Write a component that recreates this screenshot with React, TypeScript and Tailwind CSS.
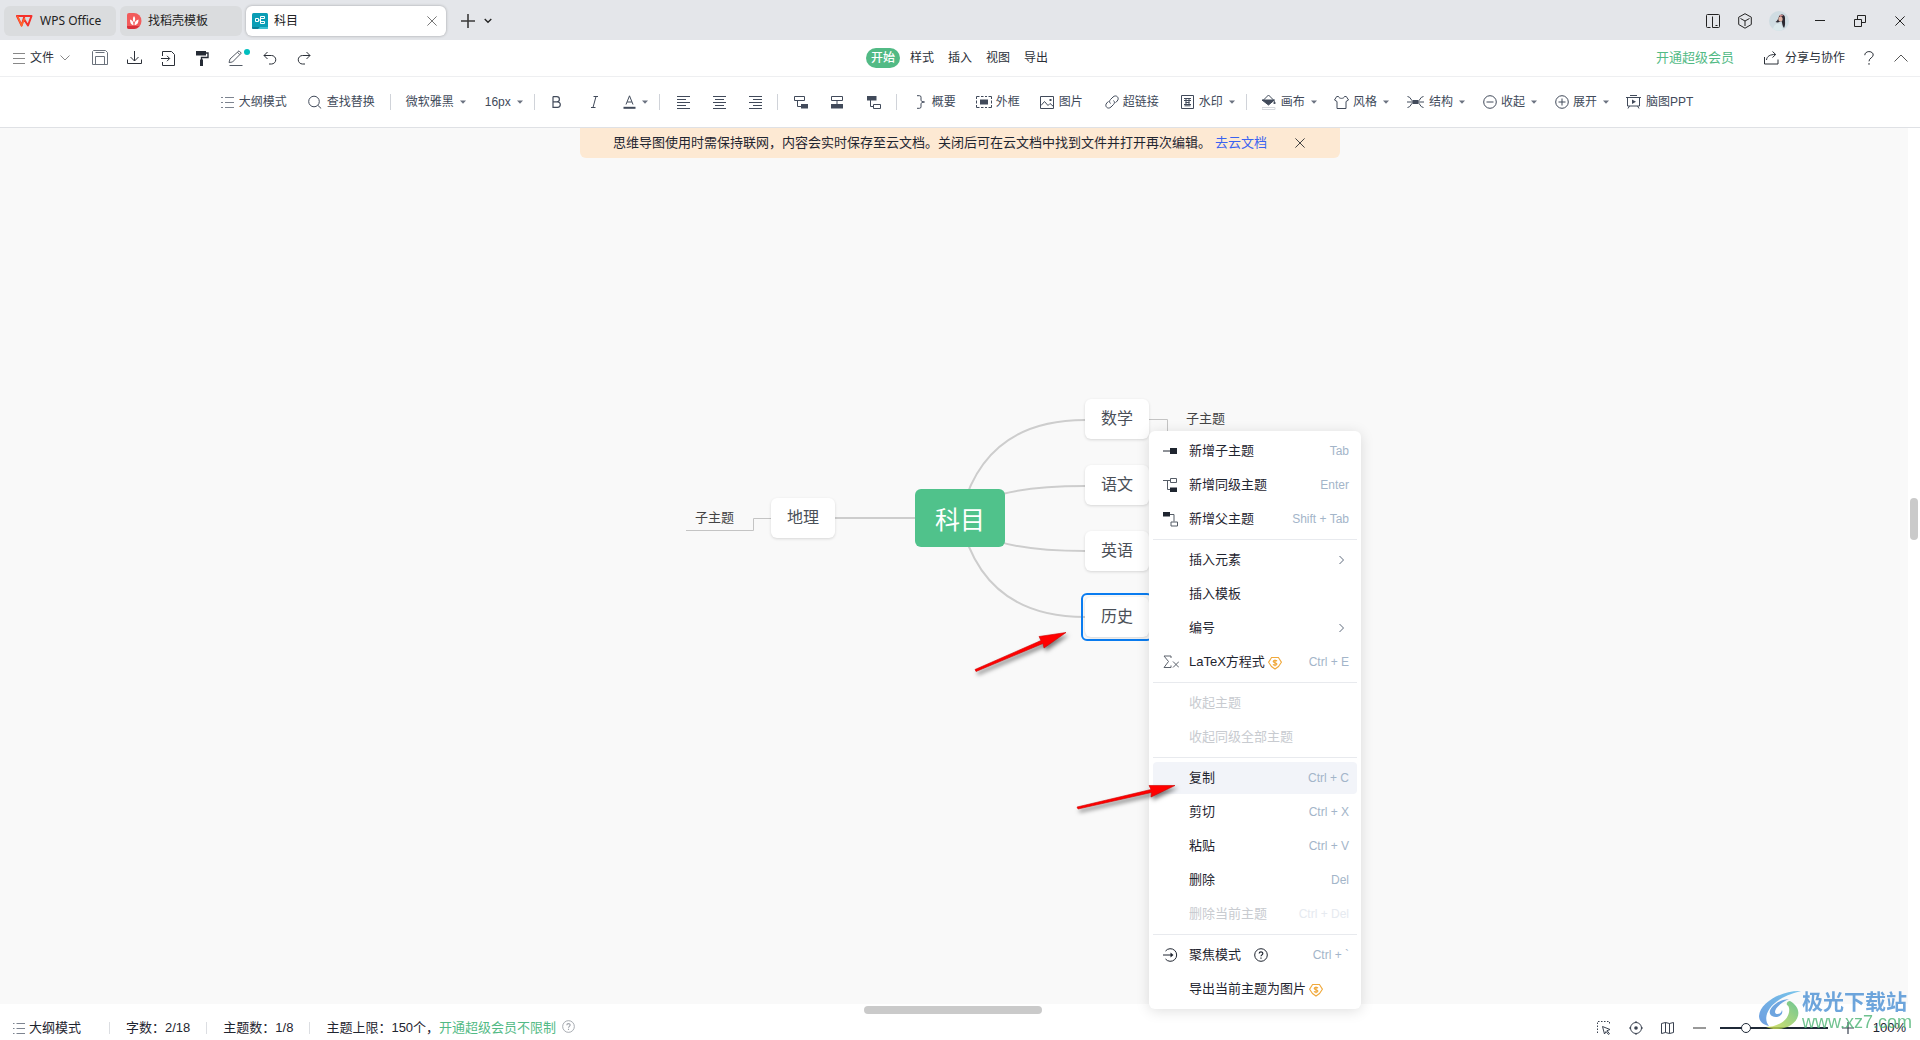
import React from "react";

type SvgProps = { children: React.ReactNode; w?: number; h?: number; vb?: string; className?: string };

function Svg({ children, w = 16, h = 16, vb, className = "" }: SvgProps) {
  return (
    <svg
      width={w}
      height={h}
      viewBox={vb ?? `0 0 ${w} ${h}`}
      fill="none"
      stroke="currentColor"
      strokeWidth={1}
      className={"shrink-0 " + className}
      aria-hidden="true"
    >
      {children}
    </svg>
  );
}

const OutlineIcon = () => (
  <Svg w={14} h={14}>
    <path d="M0 2.5h2M0 7.5h2M0 12.5h2M4 2.5h9M4 7.5h9M4 12.5h9" stroke="#7d8490" />
  </Svg>
);
const SearchIcon = () => (
  <Svg w={14} h={14}>
    <circle cx="6" cy="6.5" r="5.3" />
    <path d="M10 10.5l3.2 3" />
  </Svg>
);
const Caret = () => (
  <Svg w={6} h={4} className="text-[#6b7280]">
    <path d="M0 0.5h6l-3 3.2z" fill="currentColor" stroke="none" />
  </Svg>
);
const Close = ({ s = 10 }: { s?: number }) => (
  <Svg w={s} h={s} vb="0 0 10 10">
    <path d="M.4.4l9.2 9.2M9.6.4L.4 9.6" />
  </Svg>
);
const Coin = () => (
  <Svg w={14} h={14} className="text-[#f0a93c]">
    <path d="M3.600 1.500h6.800l3 4.700L10.500 10.500 7 13 3.500 10.500.6 6.200z" strokeWidth="1.100" />
    <path d="M8.900 5.200C8.500 4 5.200 4 5.200 5.600c0 1.500 3.700.9 3.700 2.300 0 1.600-3.300 1.500-3.800.3M7 3.500v6.800" strokeWidth="1.200" />
  </Svg>
);
const Question = ({ s = 14 }: { s?: number }) => (
  <Svg w={s} h={s} vb="0 0 14 14">
    <circle cx="7" cy="7" r="6.3" />
    <path d="M5.200 5.600c0-2.300 3.600-2.300 3.600-.1 0 1.300-1.800 1.400-1.800 2.800M7 9.500v1.200" strokeWidth="1.200" />
  </Svg>
);

function Tool({
  icon,
  label,
  caret,
  gap,
  ml,
  name,
}: {
  icon?: React.ReactNode;
  label?: string;
  caret?: boolean;
  gap?: string;
  ml: string;
  name?: string;
}) {
  return (
    <button type="button" aria-label={name} className={`flex items-center whitespace-nowrap ${ml}`}>
      {icon}
      {label && <span className={gap ?? "ml-1"}>{label}</span>}
      {caret && <span className="ml-1.5 flex"><Caret /></span>}
    </button>
  );
}
const Divider = ({ ml }: { ml: string }) => <span className={`h-4 w-px shrink-0 bg-[#d0d3d9] ${ml}`} />;

function TitleBar() {
  return (
    <header className="flex h-10 items-center bg-[#e4e6ea] pl-1 pt-px text-xs text-[#222]">
      <button type="button" className="flex h-[30px] w-28 items-center rounded-md bg-[#dadcde] pl-3">
        <Svg w={17} h={12} className="text-[#f5302b]">
          <path d="M1 1h7.500L5.600 10.500zM8.500 1h7L12 10.500 8.200 4.500" strokeWidth="2" strokeLinejoin="round" />
          <path d="M1.500 1L5.600 10.500 8.800 3" stroke="#ff6a2b" strokeWidth="1.400" />
        </Svg>
        <span className="ml-[7px] font-['Noto_Sans']">WPS Office</span>
      </button>
      <button type="button" className="ml-1 flex h-[30px] w-[122px] items-center rounded-md bg-[#dadcde] pl-1.5">
        <Svg w={16} h={16}>
          <path d="M3 0h5a7.500 8 0 010 16H3a2 2 0 01-2-2V2a2 2 0 012-2z" fill="#f25b5b" stroke="none" />
          <path d="M1 13h12.500A7.500 7.500 0 018 16H3a2 2 0 01-2-2z" fill="#d9303a" stroke="none" />
          <path d="M8 3c2 2.500 1 5 0 6.500C6.500 7.500 6.500 5 8 3zM4 6.500c2.500.5 3.500 2.500 3.500 5.500C5 12 4 9.500 4 6.500zM12.500 6.500c0 3-1 5.500-4 5.500 0-3 1.500-5 4-5.500z" fill="#fff" stroke="none" />
        </Svg>
        <span className="ml-1.5">找稻壳模板</span>
      </button>
      <div className="ml-1 flex h-[30px] w-[200px] items-center rounded-md bg-white pl-1.5 shadow-[0_0_3px_rgba(0,0,0,0.3)]">
        <Svg w={16} h={16}>
          <rect width="16" height="16" rx="1.500" fill="#0a9db5" stroke="none" />
          <path d="M0 14h8l-2 2H1.500A1.500 1.500 0 010 14.500z" fill="#0b7f97" stroke="none" />
          <path d="M8 14h8v.5a1.500 1.500 0 01-1.500 1.500H6z" fill="#3cc0d4" stroke="none" />
          <path d="M3.500 5.500h3v3h-3zM6.500 7h2M8.500 3.500v7M8.500 3.500h4v2h-4M8.500 10.500h4v-2h-4" stroke="#fff" />
        </Svg>
        <span className="ml-1.5">科目</span>
        <button type="button" aria-label="关闭标签" className="ml-auto mr-[9px] text-[#777]"><Close /></button>
      </div>
      <button type="button" aria-label="新建" className="ml-[15px]">
        <Svg w={14} h={14}><path d="M7 0v14M0 7h14" strokeWidth="1.600" stroke="#3a3a3a" /></Svg>
      </button>
      <button type="button" aria-label="标签列表" className="ml-[9px]">
        <Svg w={8} h={6}><path d="M.7 1l3.300 3.300L7.300 1" strokeWidth="1.300" /></Svg>
      </button>
      <div className="ml-auto flex items-center pr-[15px]">
        <button type="button" aria-label="分栏">
          <Svg w={14} h={14}><path d="M4.500 13.500h-3a1 1 0 01-1-1v-11a1 1 0 011-1h11a1 1 0 011 1v11a1 1 0 01-1 1h-6V2.500M9.500 11.500h2" /></Svg>
        </button>
        <button type="button" aria-label="工作空间" className="ml-[18px]">
          <Svg w={14} h={16}><path d="M7 .7l6.300 3.500v7.300L7 15.200.7 11.500V4.200zM2.500 5.500L7 8l4.500-2.500M7 8v5" /></Svg>
        </button>
        <button type="button" aria-label="用户" className="ml-[17px]">
          <Svg w={20} h={20}>
            <g stroke="none">
              <circle cx="10" cy="10" r="10" fill="#cfdce2" />
              <path d="M4 18c1-5 4-6 8-5l2 5.500a10 10 0 01-10-.5z" fill="#dbe9ec" />
              <path d="M10 5.500c2.500-3.500 6.500-2 6 2.500 0 4 .5 6-1 9-2-2-1.500-5-2.500-7-2 1-4 2-6 1 2-1 2.500-3 3.500-5.500z" fill="#2b2830" />
              <ellipse cx="11.500" cy="8" rx="2.200" ry="2.600" fill="#e3b5a5" />
              <path d="M10 4.500l2-1 2.500 1-3 1.500z" fill="#c98a8a" />
            </g>
          </Svg>
        </button>
        <button type="button" aria-label="最小化" className="ml-[26px]">
          <Svg w={10} h={10}><path d="M0 4.500h10" /></Svg>
        </button>
        <button type="button" aria-label="还原" className="ml-[29px]">
          <Svg w={12} h={12}><path d="M.5 4.500h7v7h-7zM3.500 4.500v-4h8v7h-4" /></Svg>
        </button>
        <button type="button" aria-label="关闭" className="ml-[29px]"><Close /></button>
      </div>
    </header>
  );
}

function MenuRow() {
  return (
    <nav className="grid h-[37px] grid-cols-[1fr_auto_1fr] items-center border-b border-[#eeeff1] text-xs text-[#2b3038]">
      <div className="flex items-center pl-[13px]">
        <button type="button" className="flex items-center">
          <Svg w={12} h={12} className="text-[#888]"><path d="M0 1.500h12M0 6.500h12M0 11.500h12" /></Svg>
          <span className="ml-[5px] mr-1.5">文件</span>
          <Svg w={10} h={6} className="text-[#888]"><path d="M.5.5L5 5 9.500.5" /></Svg>
        </button>
        <button type="button" aria-label="保存" className="ml-[22px]">
          <Svg><path d="M.5 1.500l1-1h12l2 2v12h-15zM3.500 2.500h9M3.500 14V6.500h9V14" stroke="#6b727c" /></Svg>
        </button>
        <button type="button" aria-label="下载" className="ml-[19px]">
          <Svg w={15} h={14}><path d="M7.500 0v10M3.500 6l4 4 4-4M.5 8.500v4h14v-4" /></Svg>
        </button>
        <button type="button" aria-label="导入" className="ml-[19px]">
          <Svg w={14} h={15}><path d="M1.500 5V.5h9l3 3v11h-12V11M0 7.500h8.500M6 4.800l2.700 2.700L6 10.200" /></Svg>
        </button>
        <button type="button" aria-label="格式刷" className="ml-5">
          <Svg w={14} h={15}>
            <path d="M1 0h10v4.500H1z" fill="#252b35" stroke="none" />
            <path d="M11 2h2v4.500H6.500V9" stroke="#252b35" strokeWidth="1.400" />
            <path d="M5 8.500h3V15H5z" fill="#252b35" stroke="none" />
          </Svg>
        </button>
        <button type="button" aria-label="画笔" className="relative ml-[19px]">
          <Svg w={15} h={16}><path d="M1 12.500l1-3.500L11 .8l2.300 2.300L4.500 12zM9.500 2.300l2.300 2.300M1.500 15.500h13" stroke="#555c66" /></Svg>
          <span className="absolute -right-[7px] -top-px size-1.5 rounded-full bg-[#00bfbf]" />
        </button>
        <button type="button" aria-label="撤销" className="ml-5">
          <Svg w={14} h={14}><path d="M4.500 1L1 4.500 4.500 8M1 4.500h7.500a4.200 4.200 0 010 8.500H6" /></Svg>
        </button>
        <button type="button" aria-label="重做" className="ml-5">
          <Svg w={14} h={14}><path d="M9.500 1L13 4.500 9.500 8M13 4.500H5.500a4.200 4.200 0 000 8.500H8" /></Svg>
        </button>
      </div>
      <div className="flex items-center pr-1.5">
        <button type="button" className="mr-2.5 h-5 w-[34px] rounded-full bg-[#52ba85] font-medium text-white">开始</button>
        {["样式", "插入", "视图", "导出"].map((t) => (
          <button type="button" key={t} className="mr-3.5 last:mr-0">{t}</button>
        ))}
      </div>
      <div className="flex items-center justify-end pr-3">
        <a href="#vip" className="text-[13px] text-[#52ba85]">开通超级会员</a>
        <button type="button" className="ml-[30px] flex items-center">
          <Svg w={15} h={14}><path d="M.5 6v7h13.500V8.500M2.500 9C3 5 6 3.500 11.500 3.500M8.500.5l3.200 3-3.200 3" /></Svg>
          <span className="ml-1.5">分享与协作</span>
        </button>
        <button type="button" aria-label="帮助" className="ml-[19px]">
          <Svg w={10} h={14}><path d="M.8 4.200C.8-.6 9.200-.6 9.200 4c0 2.700-4.200 3-4.200 6.300M5 12v1.800" /></Svg>
        </button>
        <button type="button" aria-label="收起功能区" className="ml-5">
          <Svg w={14} h={8}><path d="M.5 7.500L7 1l6.500 6.500" stroke="#555" /></Svg>
        </button>
      </div>
    </nav>
  );
}

function Toolbar() {
  return (
    <div className="flex h-[51px] items-center justify-center border-b border-[#dfe1e5] pr-1.5 text-xs text-[#414a5a]">
      <Tool ml="" icon={<OutlineIcon />} label="大纲模式" />
      <Tool ml="ml-[21px]" icon={<SearchIcon />} label="查找替换" gap="ml-[5px]" />
      <Divider ml="ml-[15px]" />
      <Tool ml="ml-[15px]" label="微软雅黑" gap="" caret />
      <Tool ml="ml-[19px]" label="16px" gap="" caret />
      <Divider ml="ml-[11px]" />
      <Tool ml="ml-[17px]" name="加粗" icon={<Svg w={10} h={12}><path d="M1 .6v10.800h4.500a2.700 2.700 0 000-5.600H1M1 .6h3.800a2.600 2.600 0 010 5.200" strokeWidth="1.200" /></Svg>} />
      <Tool ml="ml-[29px]" name="倾斜" icon={<Svg w={7} h={12}><path d="M2.500.5H7M0 11.500h4.500M5 .5l-3 11" /></Svg>} />
      <Tool ml="ml-[25px]" name="字体颜色" icon={<Svg w={13} h={14}><path d="M3 9.500L6.500.8l3.500 8.700M4.200 7h4.600" /><path d="M.5 12.800h12" strokeWidth="2" /></Svg>} caret />
      <Divider ml="ml-[11px]" />
      <Tool ml="ml-[17px]" name="左对齐" icon={<Svg w={13} h={13}><path d="M0 .5h13M0 3.500h9M0 6.500h13M0 9.500h9M0 12.500h13" /></Svg>} />
      <Tool ml="ml-[23px]" name="居中" icon={<Svg w={13} h={13}><path d="M0 .5h13M2 3.500h9M0 6.500h13M2 9.500h9M0 12.500h13" /></Svg>} />
      <Tool ml="ml-[23px]" name="右对齐" icon={<Svg w={13} h={13}><path d="M0 .5h13M4 3.500h9M0 6.500h13M4 9.500h9M0 12.500h13" /></Svg>} />
      <Divider ml="ml-[15px]" />
      <Tool ml="ml-4" name="子主题" icon={<Svg w={14} h={13}><path d="M.5.5h10v4H.5zM3.500 4.500v6h4" /><path d="M7 8h7v4.500H7z" fill="currentColor" stroke="none" /></Svg>} />
      <Tool ml="ml-[23px]" name="同级主题" icon={<Svg w={12} h={13}><path d="M.5.5h11v4H.5zM6 4.500V8" /><path d="M0 8h12v4.500H0z" fill="currentColor" stroke="none" /></Svg>} />
      <Tool ml="ml-6" name="父主题" icon={<Svg w={14} h={13}><path d="M0 0h9.500v4.500H0z" fill="currentColor" stroke="none" /><path d="M3.500 4v6.500h3M6.500 8.500h7v4h-7z" /></Svg>} />
      <Divider ml="ml-[15px]" />
      <Tool ml="ml-5" icon={<Svg w={8} h={14}><path d="M0 .7h2.500q1.500 0 1.500 1.500v3Q4 7 7.500 7 4 7 4 8.800v3q0 1.500-1.500 1.500H0" /></Svg>} label="概要" gap="ml-[7px]" />
      <Tool
        ml="ml-5"
        icon={
          <Svg w={16} h={12}>
            <path d="M.5 3V.5h3M12.500.5h3V3M15.500 9v2.500h-3M3.500 11.500h-3V9M.5 4.500v3M15.500 4.500v3M5 .5h2.500M9 .5h2M5 11.500h2.500M9 11.500h2" />
            <path d="M4 3.500h8v5H4z" fill="currentColor" stroke="none" />
          </Svg>
        }
        label="外框"
      />
      <Tool ml="ml-5" icon={<Svg w={15} h={13}><path d="M.5.5h13v12H.5zM1 9.500l3.500-4 3.500 4 2-2 3.500 3" /><path d="M9.500 3h2v2h-2z" fill="currentColor" stroke="none" /></Svg>} label="图片" />
      <Tool
        ml="ml-[22px]"
        icon={<Svg w={14} h={14}><path d="M5.500 8.500C4 7 4.500 5.500 5.500 4.500L8 2c3.200-3 7 1 4.200 4L10.500 7.700M8.500 5.500c1.500 1.500 1 3 0 4L6 12c-3.200 3-7-1-4.200-4l1.700-1.700" /></Svg>}
        label="超链接"
      />
      <Tool ml="ml-[22px]" icon={<Svg w={13} h={14}><path d="M.5.5h12v13H.5zM3 3.500h7M3 5.500h7M4.500 7.500h4M3 9.500h7M3.500 10.800h6M5 4v6M8 4v6" /></Svg>} label="水印" gap="ml-[5px]" caret />
      <Divider ml="ml-[11px]" />
      <Tool
        ml="ml-[15px]"
        icon={
          <Svg w={14} h={16}>
            <path d="M6.500 1L1 6.500h11z" />
            <path d="M0 6h12.500L6.500 11z" fill="currentColor" />
            <path d="M12.500 7.500q1.300 2 0 2.500-1.300-.5 0-2.500z" fill="currentColor" />
            <path d="M0 13.500h13v2H0z" stroke="#d5d8dd" />
          </Svg>
        }
        label="画布"
        gap="ml-[5px]"
        caret
      />
      <Tool ml="ml-[17px]" icon={<Svg w={15} h={13}><path d="M4.500.5C5 3 10 3 10.500.5h1.800L14.500 4 12 5.500V12.500H3V5.500L.5 4 2.700.5z" /></Svg>} label="风格" caret />
      <Tool
        ml="ml-[18px]"
        icon={
          <Svg w={17} h={12}>
            <path d="M0 6h17M.5.5C4 .5 4 5.500 6.500 5.500M.5 11.500C4 11.500 4 6.500 6.500 6.500M16.500.5C13 .5 13 5.500 10.500 5.500M16.500 11.500C13 11.500 13 6.500 10.500 6.500" />
            <path d="M6 4h5v4H6z" fill="currentColor" stroke="none" />
          </Svg>
        }
        label="结构"
        gap="ml-[5px]"
        caret
      />
      <Tool ml="ml-[18px]" icon={<Svg w={14} h={14}><circle cx="7" cy="7" r="6.300" /><path d="M3.500 7h7" /></Svg>} label="收起" caret />
      <Tool ml="ml-[18px]" icon={<Svg w={14} h={14}><circle cx="7" cy="7" r="6.300" /><path d="M3.500 7h7M7 3.500v7" /></Svg>} label="展开" caret />
      <Tool
        ml="ml-[17px]"
        icon={<Svg w={15} h={14}><path d="M4 .5h7M0 2.500h15M1.500 2.500v8.500h12V2.500M3.500 11l-1.500 2.500M11.500 11l1.500 2.500" /><path d="M6 4.500l4 2.300-4 2.300z" fill="currentColor" stroke="none" /></Svg>}
        label="脑图PPT"
        gap="ml-[5px]"
      />
    </div>
  );
}

const nodeBase = "absolute flex h-10 w-16 items-center justify-center rounded-md bg-white text-base text-[#4a4f57] shadow-[0_1px_3px_rgba(0,0,0,0.14)]";

type Entry = {
  label: string;
  icon?: React.ReactNode;
  after?: React.ReactNode;
  keys?: string;
  sub?: boolean;
  off?: boolean;
  active?: boolean;
};

const groups: Entry[][] = [
  [
    { label: "新增子主题", keys: "Tab", icon: <Svg w={14} h={6}><path d="M0 3h8" /><path d="M7 0h7v6H7z" fill="currentColor" stroke="none" /></Svg> },
    { label: "新增同级主题", keys: "Enter", icon: <Svg w={14} h={14}><path d="M0 2.500h7M4.500 2.500v9h3M7.500.5h6v4h-6z" stroke="#555c66" /><path d="M7 9.500h7V14H7z" fill="currentColor" stroke="none" /></Svg> },
    { label: "新增父主题", keys: "Shift + Tab", icon: <Svg w={15} h={15}><path d="M0 0h7v4.500H0z" fill="currentColor" stroke="none" /><path d="M7 2.500h4v7M8 10h6.500v4H8z" stroke="#555c66" /></Svg> },
  ],
  [
    { label: "插入元素", sub: true },
    { label: "插入模板" },
    { label: "编号", sub: true },
    {
      label: "LaTeX方程式",
      keys: "Ctrl + E",
      after: <span className="ml-[3px] mt-0.5"><Coin /></span>,
      icon: <Svg w={16} h={14}><path d="M8 3V1H1l4.500 5.500L1 12.500h7v-2M10 6.500l6 6M16 6.500l-6 6" stroke="#5c626c" /></Svg>,
    },
  ],
  [
    { label: "收起主题", off: true },
    { label: "收起同级全部主题", off: true },
  ],
  [
    { label: "复制", keys: "Ctrl + C", active: true },
    { label: "剪切", keys: "Ctrl + X" },
    { label: "粘贴", keys: "Ctrl + V" },
    { label: "删除", keys: "Del" },
    { label: "删除当前主题", keys: "Ctrl + Del", off: true },
  ],
  [
    {
      label: "聚焦模式",
      keys: "Ctrl + `",
      after: <span className="ml-[13px]"><Question /></span>,
      icon: <Svg w={15} h={14}><path d="M2.500 3a6.300 6.300 0 110 8M0 7h9" /><path d="M7.500 4.500L10.500 7l-3 2.500z" fill="currentColor" stroke="none" /></Svg>,
    },
    { label: "导出当前主题为图片", after: <span className="ml-[3px] mt-0.5"><Coin /></span> },
  ],
];

function ContextMenu() {
  return (
    <div
      role="menu"
      className="absolute left-[464px] top-[303px] z-10 w-[212px] rounded-md bg-white px-1 py-[3px] text-[13px] text-[#1f2530] shadow-[0_2px_14px_rgba(0,0,0,0.13)]"
    >
      {groups.map((g, i) => (
        <div key={i} className={`flex flex-col gap-0.5 ${i ? "mt-[3px] border-t border-[#e8eaee] pb-px pt-1" : "py-px"}`}>
          {g.map((e) => (
            <button
              type="button"
              role="menuitem"
              key={e.label}
              disabled={e.off}
              className={`flex h-8 w-full items-center rounded-[4px] pr-2 ${e.active ? "bg-[#f2f4f9]" : ""} ${e.off ? "text-[#c8cbd0]" : ""}`}
            >
              <span className="flex w-9 shrink-0 items-center pl-2.5">{e.icon}</span>
              <span className="whitespace-nowrap">{e.label}</span>
              {e.after}
              {e.keys && <kbd className={`ml-auto whitespace-nowrap font-['Liberation_Sans',sans-serif] text-xs ${e.off ? "text-[#e6eaf0]" : "text-[#a3b5c9]"}`}>{e.keys}</kbd>}
              {e.sub && (
                <span className="ml-auto mr-[5px] text-[#5f6b7c]">
                  <Svg w={5} h={10}><path d="M.5 1l4 4-4 4" /></Svg>
                </span>
              )}
            </button>
          ))}
        </div>
      ))}
    </div>
  );
}

function Canvas() {
  return (
    <main className="relative flex min-h-0 flex-1">
      <div className="flex-1 bg-[#f9f9f9]" />
      <div className="flex w-3 flex-col items-end bg-white pr-0.5">
        <div className="mt-[370px] h-[42px] w-2 rounded-full bg-[#cacaca]" />
      </div>

      <div className="absolute left-1/2 top-0 flex h-[30px] w-[760px] -translate-x-1/2 items-center rounded-b-md bg-[#fde9d3] pl-[33px] text-[13px] text-[#1f2530]">
        <span className="whitespace-nowrap">思维导图使用时需保持联网，内容会实时保存至云文档。关闭后可在云文档中找到文件并打开再次编辑。</span>
        <a href="#cloud" className="ml-1 whitespace-nowrap text-[#3a63f0]">去云文档</a>
        <button type="button" aria-label="关闭提示" className="ml-7 text-[#444]"><Close /></button>
      </div>

      <div className="absolute left-1/2 top-0 -ml-[275px] h-full w-[700px]">
        <svg width="700" height="640" viewBox="0 0 700 640" fill="none" className="absolute left-0 top-0" aria-hidden="true">
          <g stroke="#cdcdcd" strokeWidth="2">
            <path d="M275 390Q297 292 400 292M275 390Q297 358 400 358M275 390Q297 423 400 423M275 390Q297 489 400 489M275 390H150" />
            <path d="M1 402.500H68.500V390.500H87M464 291.500H482.500V303.500H549" strokeWidth="1" stroke="#c4c4c4" />
          </g>
        </svg>
        <div className="absolute left-[10px] top-[380px] text-[13px] leading-5 text-[#444]">子主题</div>
        <div className="absolute left-[501px] top-[281px] text-[13px] leading-5 text-[#444]">子主题</div>
        <div className={`${nodeBase} left-[86px] top-[370px]`}>地理</div>
        <div className={`${nodeBase} left-[400px] top-[271px]`}>数学</div>
        <div className={`${nodeBase} left-[400px] top-[337px]`}>语文</div>
        <div className={`${nodeBase} left-[400px] top-[403px]`}>英语</div>
        <div className="absolute left-[396px] top-[465px] h-12 w-[72px] rounded-md border-2 border-[#0a7cf0]" />
        <div className={`${nodeBase} left-[400px] top-[469px]`}>历史</div>
        <div className="absolute left-[230px] top-[361px] flex h-[58px] w-[90px] items-center justify-center rounded-md bg-[#50c28b] pt-1 text-[25px] leading-none text-white">科目</div>
        <ContextMenu />
        <svg
          width="700"
          height="720"
          viewBox="0 0 700 720"
          className="pointer-events-none absolute left-0 top-0 z-20 drop-shadow-[2px_3px_2px_rgba(0,0,0,0.5)]"
          aria-hidden="true"
        >
          <g stroke="#c00" strokeWidth=".6" fill="#f00">
            <path d="M290 541.500L356 512.500 354 508.500 381 504.500 359 520 358 515.500 291 543.500z" />
            <path d="M392 679L466 661.500 464 657.500 490 657.500 466 669 466.500 664.500 393 681z" />
          </g>
        </svg>
      </div>
    </main>
  );
}

function StatusBar() {
  return (
    <footer className="relative flex h-9 items-end pb-px text-[13px] text-[#1f2530]">
      <div className="absolute left-1/2 top-0.5 -ml-24 h-2 w-[178px] rounded-full bg-[#cacaca]" />
      <div className="flex h-[22px] items-center pl-[13px]">
        <button type="button" className="flex items-center">
          <Svg w={12} h={12}><path d="M0 1.500h1.500M0 6.500h1.500M0 11.500h1.500M3.500 1.500H12M3.500 6.500H12M3.500 11.500H12" stroke="#7d8490" /></Svg>
          <span className="ml-1">大纲模式</span>
        </button>
        <span className="ml-7 h-3 w-px bg-[#dcdee2]" />
        <span className="ml-4">字数：2/18</span>
        <span className="ml-4 h-3 w-px bg-[#dcdee2]" />
        <span className="ml-4">主题数：1/8</span>
        <span className="ml-4 h-3 w-px bg-[#dcdee2]" />
        <span className="ml-4">主题上限：150个，</span>
        <a href="#vip" className="text-[#52ba85]">开通超级会员不限制</a>
        <button type="button" aria-label="说明" className="mb-1 ml-1.5 text-[#a0a4ab]"><Question s={13} /></button>
      </div>
      <div className="ml-auto flex h-[22px] items-center pr-3.5 text-[#3a4250]">
        <button type="button" aria-label="框选">
          <Svg w={14} h={14}><path d="M.5 12V.5h12V4" strokeDasharray="1.500 1.500" /><path d="M5.500 5.500l7.500 3-3 1.200 2.500 3-1 .8-2.500-3L7.500 13z" /></Svg>
        </button>
        <button type="button" aria-label="定位" className="ml-[18px]">
          <Svg w={14} h={14}><circle cx="7" cy="7" r="5.500" /><circle cx="7" cy="7" r="1.800" fill="currentColor" stroke="none" /><path d="M7 0v2M7 12v2M0 7h2M12 7h2" /></Svg>
        </button>
        <button type="button" aria-label="导航" className="ml-[18px]">
          <Svg w={13} h={12}><path d="M.5 1.500L4.500.5 8.500 1.500 12.500.5v10l-4 1-4-1-4 1zM4.500.5v10M8.500 1.500v10" /></Svg>
        </button>
        <button type="button" aria-label="缩小" className="ml-[19px]"><Svg w={13} h={2}><path d="M0 1h13" strokeWidth="1.500" stroke="#777" /></Svg></button>
        <input
          type="range"
          aria-label="缩放"
          min={0}
          max={100}
          defaultValue={22}
          className="ml-3.5 h-[10px] w-[108px] appearance-none bg-[linear-gradient(#1f2937,#1f2937)] bg-[length:100%_2px] bg-center bg-no-repeat [&::-webkit-slider-thumb]:size-[10px] [&::-webkit-slider-thumb]:appearance-none [&::-webkit-slider-thumb]:rounded-full [&::-webkit-slider-thumb]:border [&::-webkit-slider-thumb]:border-[#1f2937] [&::-webkit-slider-thumb]:bg-white"
        />
        <button type="button" aria-label="放大" className="ml-[14px]"><Svg w={12} h={12}><path d="M6 0v12M0 6h12" strokeWidth="1.200" /></Svg></button>
        <span className="ml-[19px] text-[#1f2530]">100%</span>
      </div>

      <div className="pointer-events-none absolute bottom-2 right-2 flex items-start opacity-80">
        <svg width="44" height="42" viewBox="0 0 44 42" aria-hidden="true">
          <defs>
            <linearGradient id="sky" x1="0" y1="1" x2="1" y2="0"><stop stopColor="#4a86d8" /><stop offset="1" stopColor="#58b8e8" /></linearGradient>
            <linearGradient id="leaf" x1="0" y1="1" x2="1" y2="0"><stop stopColor="#d6de4a" /><stop offset="1" stopColor="#4cb878" /></linearGradient>
          </defs>
          <path d="M43 1C25 0 2 12 1 26c0 6 5 9 10 10C3 27 12 8 43 1z" fill="url(#sky)" />
          <path d="M31 9c-14 1-24 13-17 17 5 3 12-1 10-6-1 5-7 5-7 2 0-4 7-10 14-13z" fill="#4a8fd8" />
          <path d="M29 15c4 2 3 13-6 18-5 3-10 4-15 4 6 3 18 3 25-2 9-6 11-17-1-24-2 0-4 2-3 4z" fill="url(#leaf)" />
        </svg>
        <div className="whitespace-nowrap">
          <div className="text-[21px] font-bold leading-6 text-[#4a90d4]">极光下载站</div>
          <div className="font-['Liberation_Sans',sans-serif] text-[18px] leading-4 text-[#4cb474]">www.xz7.com</div>
        </div>
      </div>
    </footer>
  );
}

export default function App() {
  return (
    <div className="flex h-screen flex-col overflow-hidden bg-white font-['Liberation_Sans','Noto_Sans_CJK_SC',sans-serif]">
      <TitleBar />
      <MenuRow />
      <Toolbar />
      <Canvas />
      <StatusBar />
    </div>
  );
}
